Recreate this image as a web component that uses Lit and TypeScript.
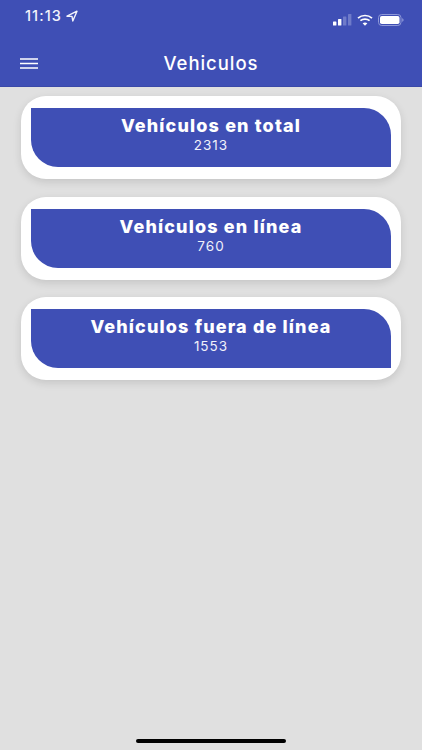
import { LitElement, html, css } from "lit";
import { customElement } from "lit/decorators.js";

const CARDS = [
  { title: "Vehículos en total", value: "2313" },
  { title: "Vehículos en línea", value: "760" },
  { title: "Vehículos fuera de línea", value: "1553" },
];

@customElement("app-root")
export class AppRoot extends LitElement {
  static styles = css`
    :host {
      display: block;
      width: 422px;
      height: 750px;
      position: relative;
      overflow: hidden;
      background: #e0e0e0;
      font-family: Inter, "Liberation Sans", sans-serif;
      color: #fff;
    }
    .header {
      height: 87px;
      background: #3f4fb5;
      box-sizing: border-box;
      border-bottom: 1px solid #3a49a8;
      display: flex;
      flex-direction: column;
    }
    .status {
      height: 40px;
      display: flex;
      align-items: flex-start;
      justify-content: space-between;
      padding: 8px 18px 0 25px;
      box-sizing: border-box;
    }
    .time {
      display: flex;
      align-items: center;
      gap: 4px;
      font-size: 14.5px;
      font-weight: 500;
      line-height: 15px;
      letter-spacing: 1.1px;
      color: #f2f3fb;
    }
    .sys {
      display: flex;
      align-items: center;
      gap: 5px;
      padding-top: 6px;
    }
    .bar {
      flex: 1;
      display: grid;
      grid-template-columns: 1fr auto 1fr;
      align-items: center;
      padding-left: 20px;
    }
    .menu {
      display: block;
    }
    .title {
      font-size: 18.5px;
      font-weight: 500;
      line-height: 22px;
      letter-spacing: 0.95px;
      transform: translateX(-10px);
    }
    .list {
      display: flex;
      flex-direction: column;
      gap: 17.5px;
      padding: 9px 21px 0;
    }
    .card {
      background: #fff;
      border-radius: 25px;
      height: 83px;
      box-sizing: border-box;
      padding: 12px 10px;
      box-shadow: 0 3px 9px rgba(0, 0, 0, 0.12);
    }
    .inner {
      background: #3f4fb5;
      height: 59px;
      border-radius: 0 27px 0 27px;
      display: flex;
      flex-direction: column;
      align-items: center;
      padding-top: 7px;
      box-sizing: border-box;
    }
    .name {
      font-size: 18px;
      font-weight: 800;
      line-height: 22px;
      letter-spacing: 1.15px;
    }
    .value {
      font-size: 13.5px;
      font-weight: 400;
      line-height: 16px;
      letter-spacing: 1px;
      color: #f0f1fa;
    }
    .home {
      position: absolute;
      left: 136px;
      bottom: 7px;
      width: 150px;
      height: 4px;
      border-radius: 2px;
      background: #000;
    }
  `;

  render() {
    return html`
      <div class="header">
        <div class="status">
          <div class="time">
            <span>11:13</span>
            <svg width="12" height="12" viewBox="0 0 12 12" fill="none" stroke="#f2f3fb" stroke-width="1.4" stroke-linejoin="round">
              <path d="M1 6.2 L11 1.2 L6.8 11 L6 6.4 Z" />
            </svg>
          </div>
          <div class="sys">
            <svg width="19" height="12" viewBox="0 0 19 12">
              <rect x="0" y="7.5" width="3.4" height="4" rx="0.6" fill="#fff" />
              <rect x="5" y="5" width="3.4" height="6.5" rx="0.6" fill="#fff" />
              <rect x="10" y="2.5" width="3.4" height="9" rx="0.6" fill="#6f7bc9" />
              <rect x="15" y="0" width="3.4" height="11.5" rx="0.6" fill="#6f7bc9" />
            </svg>
            <svg width="16" height="12" viewBox="0 0 16 12" fill="none" stroke="#fff" stroke-width="1.7">
              <path d="M1 4.2 C5 0.6 11 0.6 15 4.2" />
              <path d="M3.4 6.7 C6 4.5 10 4.5 12.6 6.7" />
              <path d="M8 11.7 L5.6 9.2 Q8 7.6 10.4 9.2 Z" fill="#fff" stroke="none" />
            </svg>
            <svg width="26" height="12" viewBox="0 0 26 12">
              <rect x="0.5" y="0.5" width="22.5" height="11" rx="3.2" fill="none" stroke="#8f99d8" />
              <rect x="2" y="2" width="19.5" height="8" rx="1.8" fill="#fff" />
              <path d="M24.2 4.2 C25.2 4.5 25.6 5.2 25.6 6 C25.6 6.8 25.2 7.5 24.2 7.8 Z" fill="#8f99d8" />
            </svg>
          </div>
        </div>
        <div class="bar">
          <svg class="menu" width="18" height="11" viewBox="0 0 18 11" stroke="#fff" stroke-width="1.5">
            <path d="M0 1 H18 M0 5.5 H18 M0 10 H18" />
          </svg>
          <span class="title">Vehiculos</span>
          <span></span>
        </div>
      </div>
      <div class="list">
        ${CARDS.map(
          (c) => html`
            <div class="card">
              <div class="inner">
                <div class="name">${c.title}</div>
                <div class="value">${c.value}</div>
              </div>
            </div>
          `
        )}
      </div>
      <div class="home"></div>
    `;
  }
}
